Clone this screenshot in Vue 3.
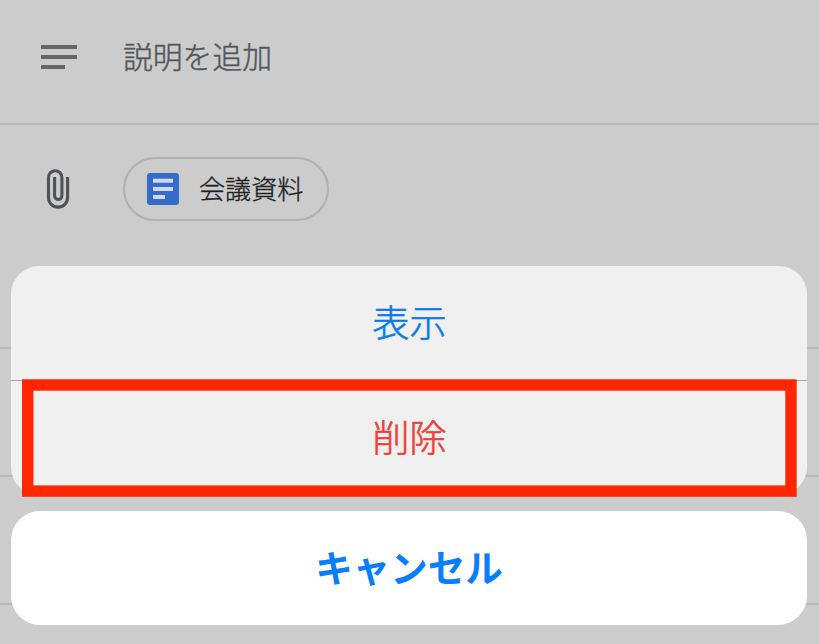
<script setup>
import { ref } from "vue";

const placeholder = ref("説明を追加");
const attachment = ref("会議資料");
</script>

<template>
  <div class="screen">
    <main class="event">
      <section class="row description">
        <svg class="icon" width="38" height="26" viewBox="0 0 38 26">
          <path d="M1 1h36v4H1zM1 11h36v4H1zM1 21h24v4H1z" fill="#656567" />
        </svg>
        <span class="placeholder">{{ placeholder }}</span>
      </section>

      <section class="row attachments">
        <svg class="icon" width="38" height="42" viewBox="0 0 38 42">
          <path
            d="M27.6 9v20.6a9.55 9.55 0 0 1-19.1 0V9.4a6.7 6.7 0 0 1 13.4 0v18.4a3.65 3.65 0 0 1-7.3 0V9"
            fill="none"
            stroke="#505256"
            stroke-width="3.1"
          />
        </svg>
        <div class="chip">
          <svg width="32" height="32" viewBox="0 0 32 32">
            <rect width="32" height="32" rx="3" fill="#366cc9" />
            <path d="M6 5.8h20v4H6zM6 14h20v4H6zM6 22h12v4H6z" fill="#d2d8e2" />
          </svg>
          <span class="chip-name">{{ attachment }}</span>
        </div>
      </section>

      <section class="row middle"></section>
      <section class="row middle"></section>
    </main>

    <!-- Action sheet -->
    <div class="sheet">
      <div class="actions">
        <button class="action">表示</button>
        <button class="action delete">削除</button>
      </div>
      <button class="action cancel">キャンセル</button>
      <!-- Highlight around the delete button -->
      <svg class="highlight" width="776" height="119" viewBox="0 0 776 119">
        <rect x="6.7" y="7" width="763.3" height="106.1" fill="none" stroke="#ff2600" stroke-width="11.4" />
      </svg>
    </div>
  </div>
</template>

<style>
body {
  background: #cccccc;
}
</style>

<style scoped>
.screen {
  position: relative;
  height: 644px;
  overflow: hidden;
  background: #cccccc;
  font-family: "Noto Sans CJK JP", sans-serif;
}

.row {
  display: flex;
  box-sizing: border-box;
  padding-left: 40px;
  border-bottom: 2px solid #b9b9ba;
}

.icon {
  flex: none;
}

.description {
  height: 125px;
  padding-top: 44px;
}

.placeholder {
  margin: -11px 0 0 45px;
  color: #555659;
  font-size: 29.8px;
  font-weight: 300;
  line-height: 44px;
  -webkit-text-stroke: 0.45px;
}

.attachments {
  height: 224px;
  padding-top: 32px;
}

.attachments .icon {
  margin-top: 11px;
}

.chip {
  display: flex;
  align-items: center;
  box-sizing: border-box;
  width: 206px;
  height: 64px;
  margin-left: 45px;
  padding-left: 22px;
  border: 2px solid #b0b0b1;
  border-radius: 32px;
}

.chip-name {
  margin: -2px 0 0 20px;
  color: #202124;
  font-size: 26.1px;
  font-weight: 300;
  line-height: 38px;
  white-space: nowrap;
  -webkit-text-stroke: 0.35px;
}

.middle {
  height: 128px;
}

.sheet {
  position: absolute;
  top: 266px;
  left: 11px;
  width: 796px;
}

.actions {
  overflow: hidden;
  border-radius: 28px;
  background: #f0f0f0;
}

.action {
  display: block;
  box-sizing: border-box;
  width: 100%;
  height: 114px;
  padding: 0 0 4px 1px;
  border: none;
  background: transparent;
  color: #087aef;
  font-family: inherit;
  font-size: 37.2px;
  font-weight: 300;
  line-height: 110px;
  -webkit-text-stroke: 0.6px;
}

.delete {
  height: 115px;
  border-top: 1px solid #a9a9a9;
  color: #ee4038;
}

.cancel {
  margin-top: 16px;
  padding-left: 0;
  border-radius: 29px;
  background: #ffffff;
  color: #087eff;
  font-size: 37.5px;
  font-weight: 700;
  -webkit-text-stroke: 0;
}

.highlight {
  position: absolute;
  top: 112px;
  left: 10px;
}
</style>
